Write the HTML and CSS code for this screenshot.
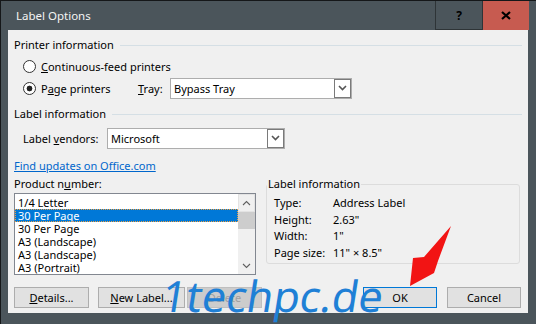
FILE: index.html
```html
<!DOCTYPE html>
<html lang="en">
<head>
    <meta charset="UTF-8">
    <title>Label Options</title>
    <link rel="stylesheet" href="styles.css">
</head>
<body>

    <div class="window">
        <div class="titlebar">
            <span class="title">Label Options</span>
            <span class="caption-btn help">?</span>
            <span class="caption-btn close">
                <svg width="10" height="9" viewBox="0 0 10 9"><path d="M1 1 L9 8 M9 1 L1 8" stroke="#000" stroke-width="2.2" fill="none"/></svg>
            </span>
        </div>

        <div class="client">
            <div class="group-head">Printer information</div>
            <div class="radio-row first">
                <span class="radio"></span><span><u>C</u>ontinuous-feed printers</span>
            </div>
            <div class="radio-row">
                <div class="printer-choice">
                    <span class="radio checked"></span><span>P<u>a</u>ge printers</span>
                </div>
                <span class="tray-label"><u>T</u>ray:</span>
                <div class="combo tray">
                    <span class="value">Bypass Tray</span>
                    <span class="drop">
                        <svg width="9" height="6" viewBox="0 0 9 6"><path d="M1 1 L4.5 4.5 L8 1" stroke="#555" stroke-width="1.6" fill="none"/></svg>
                    </span>
                </div>
            </div>

            <div class="group-head second">Label information</div>
            <div class="vendor-row">
                <span class="vendor-label">Label <u>v</u>endors:</span>
                <div class="combo vendor">
                    <span class="value">Microsoft</span>
                    <span class="drop">
                        <svg width="9" height="6" viewBox="0 0 9 6"><path d="M1 1 L4.5 4.5 L8 1" stroke="#555" stroke-width="1.6" fill="none"/></svg>
                    </span>
                </div>
            </div>

            <a class="link" href="#">Find updates on Office.com</a>

            <div class="middle">
                <div class="product">
                    <div class="product-label">Product n<u>u</u>mber:</div>
                    <div class="listbox">
                        <ul class="items">
                            <li>1/4 Letter</li>
                            <li class="selected">30 Per Page</li>
                            <li>30 Per Page</li>
                            <li>A3 (Landscape)</li>
                            <li>A3 (Landscape)</li>
                            <li>A3 (Portrait)</li>
                        </ul>
                        <div class="scrollbar">
                            <span class="arrow-btn up">
                                <svg width="9" height="6" viewBox="0 0 9 6"><path d="M1 5 L4.5 1.5 L8 5" stroke="#606060" stroke-width="1.1" fill="none"/></svg>
                            </span>
                            <span class="thumb"></span>
                            <span class="track"></span>
                            <span class="arrow-btn down">
                                <svg width="9" height="6" viewBox="0 0 9 6"><path d="M1 1 L4.5 4.5 L8 1" stroke="#606060" stroke-width="1.1" fill="none"/></svg>
                            </span>
                        </div>
                    </div>
                </div>

                <fieldset class="info">
                    <legend>Label information</legend>
                    <div class="info-rows">
                        <span>Type:</span><span>Address Label</span>
                        <span>Height:</span><span>2.63"</span>
                        <span>Width:</span><span>1"</span>
                        <span>Page size:</span><span>11" &times; 8.5"</span>
                    </div>
                </fieldset>
            </div>

            <div class="buttons">
                <button class="btn details"><u>D</u>etails...</button>
                <button class="btn new-label"><u>N</u>ew Label...</button>
                <button class="btn delete" disabled>Delete</button>
                <button class="btn ok">OK</button>
                <button class="btn cancel">Cancel</button>
            </div>
        </div>

        <div class="watermark">1techpc.de</div>
        <svg class="pointer" width="536" height="324" viewBox="0 0 536 324">
            <polygon points="451,226 438,261 434,273 410,286 413,258 424,257" fill="#f21414"/>
        </svg>
    </div>

</body>
</html>
```

FILE: styles.css
```css
body {
    margin: 0;
    font-family: "Noto Sans", sans-serif;
    font-size: 11px;
    color: #000;
    background-color: #4b555b;
}

.window {
    position: relative;
    width: 536px;
    height: 324px;
    box-sizing: border-box;
    background-color: #4b555b;
    border-top: 1px solid #151719;
    border-left: 1px solid #151719;
    overflow: hidden;
}

.titlebar {
    display: flex;
    height: 29px;
    margin-right: 7px;
}

.title {
    flex: 1;
    padding-left: 15px;
    line-height: 29px;
    font-size: 11.5px;
    color: #f4f4f4;
}

.caption-btn {
    display: flex;
    align-items: center;
    justify-content: center;
    box-sizing: border-box;
}

.help {
    width: 48px;
    border: 1px solid #2e3437;
    border-top: none;
    font-weight: bold;
    font-size: 12px;
}

.close {
    width: 46px;
    background-color: #c75b50;
}

.client {
    box-sizing: border-box;
    height: 283px;
    margin: 0 8px 0 7px;
    padding: 7px 6px 0 6px;
    background-color: #f0f0f0;
}

.group-head {
    display: flex;
    align-items: center;
    height: 16px;
    line-height: 16px;
}

.group-head::after {
    content: "";
    flex: 1;
    height: 1px;
    margin-left: 6px;
    background-color: #d5dfe5;
}

.group-head.second {
    margin-top: 7px;
}

.radio-row {
    display: flex;
    align-items: center;
    height: 22px;
    padding-left: 9px;
}

.radio-row.first {
    margin-top: 2px;
}

.radio {
    width: 13px;
    height: 13px;
    box-sizing: border-box;
    margin-right: 5px;
    border: 1px solid #333;
    border-radius: 50%;
    background: #fff;
}

.radio.checked {
    background: radial-gradient(circle, #222 0 2.6px, #fff 3.2px);
}

.printer-choice {
    display: flex;
    align-items: center;
    width: 115px;
}

.tray-label {
    width: 32px;
}

.combo {
    display: flex;
    align-items: stretch;
    box-sizing: border-box;
    height: 21px;
    border: 1px solid #adadad;
    background-color: #fff;
}

.combo .value {
    flex: 1;
    padding-left: 3px;
    line-height: 19px;
}

.combo .drop {
    display: flex;
    align-items: center;
    justify-content: center;
    width: 17px;
    box-sizing: border-box;
    border: 1px solid #7a7a7a;
    background-color: #fff;
}

.combo.tray {
    width: 182px;
}

.vendor-row {
    display: flex;
    align-items: center;
    height: 22px;
    margin-top: 5px;
    padding-left: 9px;
}

.vendor-label {
    width: 84px;
}

.combo.vendor {
    width: 178px;
}

.link {
    display: block;
    width: fit-content;
    margin-top: 9px;
    line-height: 16px;
    color: #0066cc;
}

.middle {
    display: flex;
    align-items: flex-start;
    gap: 10px;
    margin-top: 2px;
}

.product {
    width: 242px;
}

.product-label {
    line-height: 16px;
}

.listbox {
    display: flex;
    box-sizing: border-box;
    height: 82px;
    margin-top: 1px;
    border: 1px solid #828790;
    background-color: #fff;
}

.items {
    flex: 1;
    margin: 0;
    padding: 2px 0 0 0;
    list-style: none;
    overflow: hidden;
}

.items li {
    height: 13px;
    line-height: 13px;
    padding-left: 3px;
}

.items li.selected {
    background-color: #0078d7;
    color: #fff;
    outline: 1px dotted #f0a040;
    outline-offset: -1px;
}

.scrollbar {
    display: flex;
    flex-direction: column;
    width: 17px;
    background-color: #f0f0f0;
}

.arrow-btn {
    display: flex;
    align-items: center;
    justify-content: center;
    height: 17px;
}

.arrow-btn.up {
    height: 18px;
    border: 1px solid #e3e3e3;
    box-sizing: border-box;
}

.thumb {
    height: 17px;
    background-color: #cdcdcd;
}

.track {
    flex: 1;
}

.info {
    box-sizing: border-box;
    width: 254px;
    height: 88px;
    margin: 0;
    padding: 3px 0 0 0;
    border: 1px solid #dcdcdc;
    border-radius: 3px;
}

.info legend {
    padding: 0 1px;
    line-height: 16px;
}

.info-rows {
    display: grid;
    grid-template-columns: 59px 1fr;
    padding-left: 7px;
    line-height: 16.5px;
}

.buttons {
    display: flex;
    margin-top: 12px;
    margin-right: 1px;
}

.btn {
    height: 21px;
    box-sizing: border-box;
    padding: 0;
    border: 1px solid #adadad;
    background-color: #e1e1e1;
    font-family: inherit;
    font-size: 11px;
    color: #000;
}

.details {
    width: 75px;
}

.new-label {
    width: 87px;
    margin-left: 9px;
}

.delete {
    width: 75px;
    margin-left: 2px;
    border-color: #bfbfbf;
    background-color: #cccccc;
    color: #a0a0a0;
}

.ok {
    width: 74px;
    margin-left: auto;
    border-color: #0078d7;
}

.cancel {
    width: 74px;
    margin-left: 10px;
}

.watermark {
    position: absolute;
    left: 158px;
    top: 273px;
    font-size: 43px;
    line-height: 43px;
    color: #1f80d6;
    white-space: nowrap;
    transform: skewX(-9deg);
    transform-origin: left bottom;
}

.pointer {
    position: absolute;
    left: -1px;
    top: -1px;
}
```
